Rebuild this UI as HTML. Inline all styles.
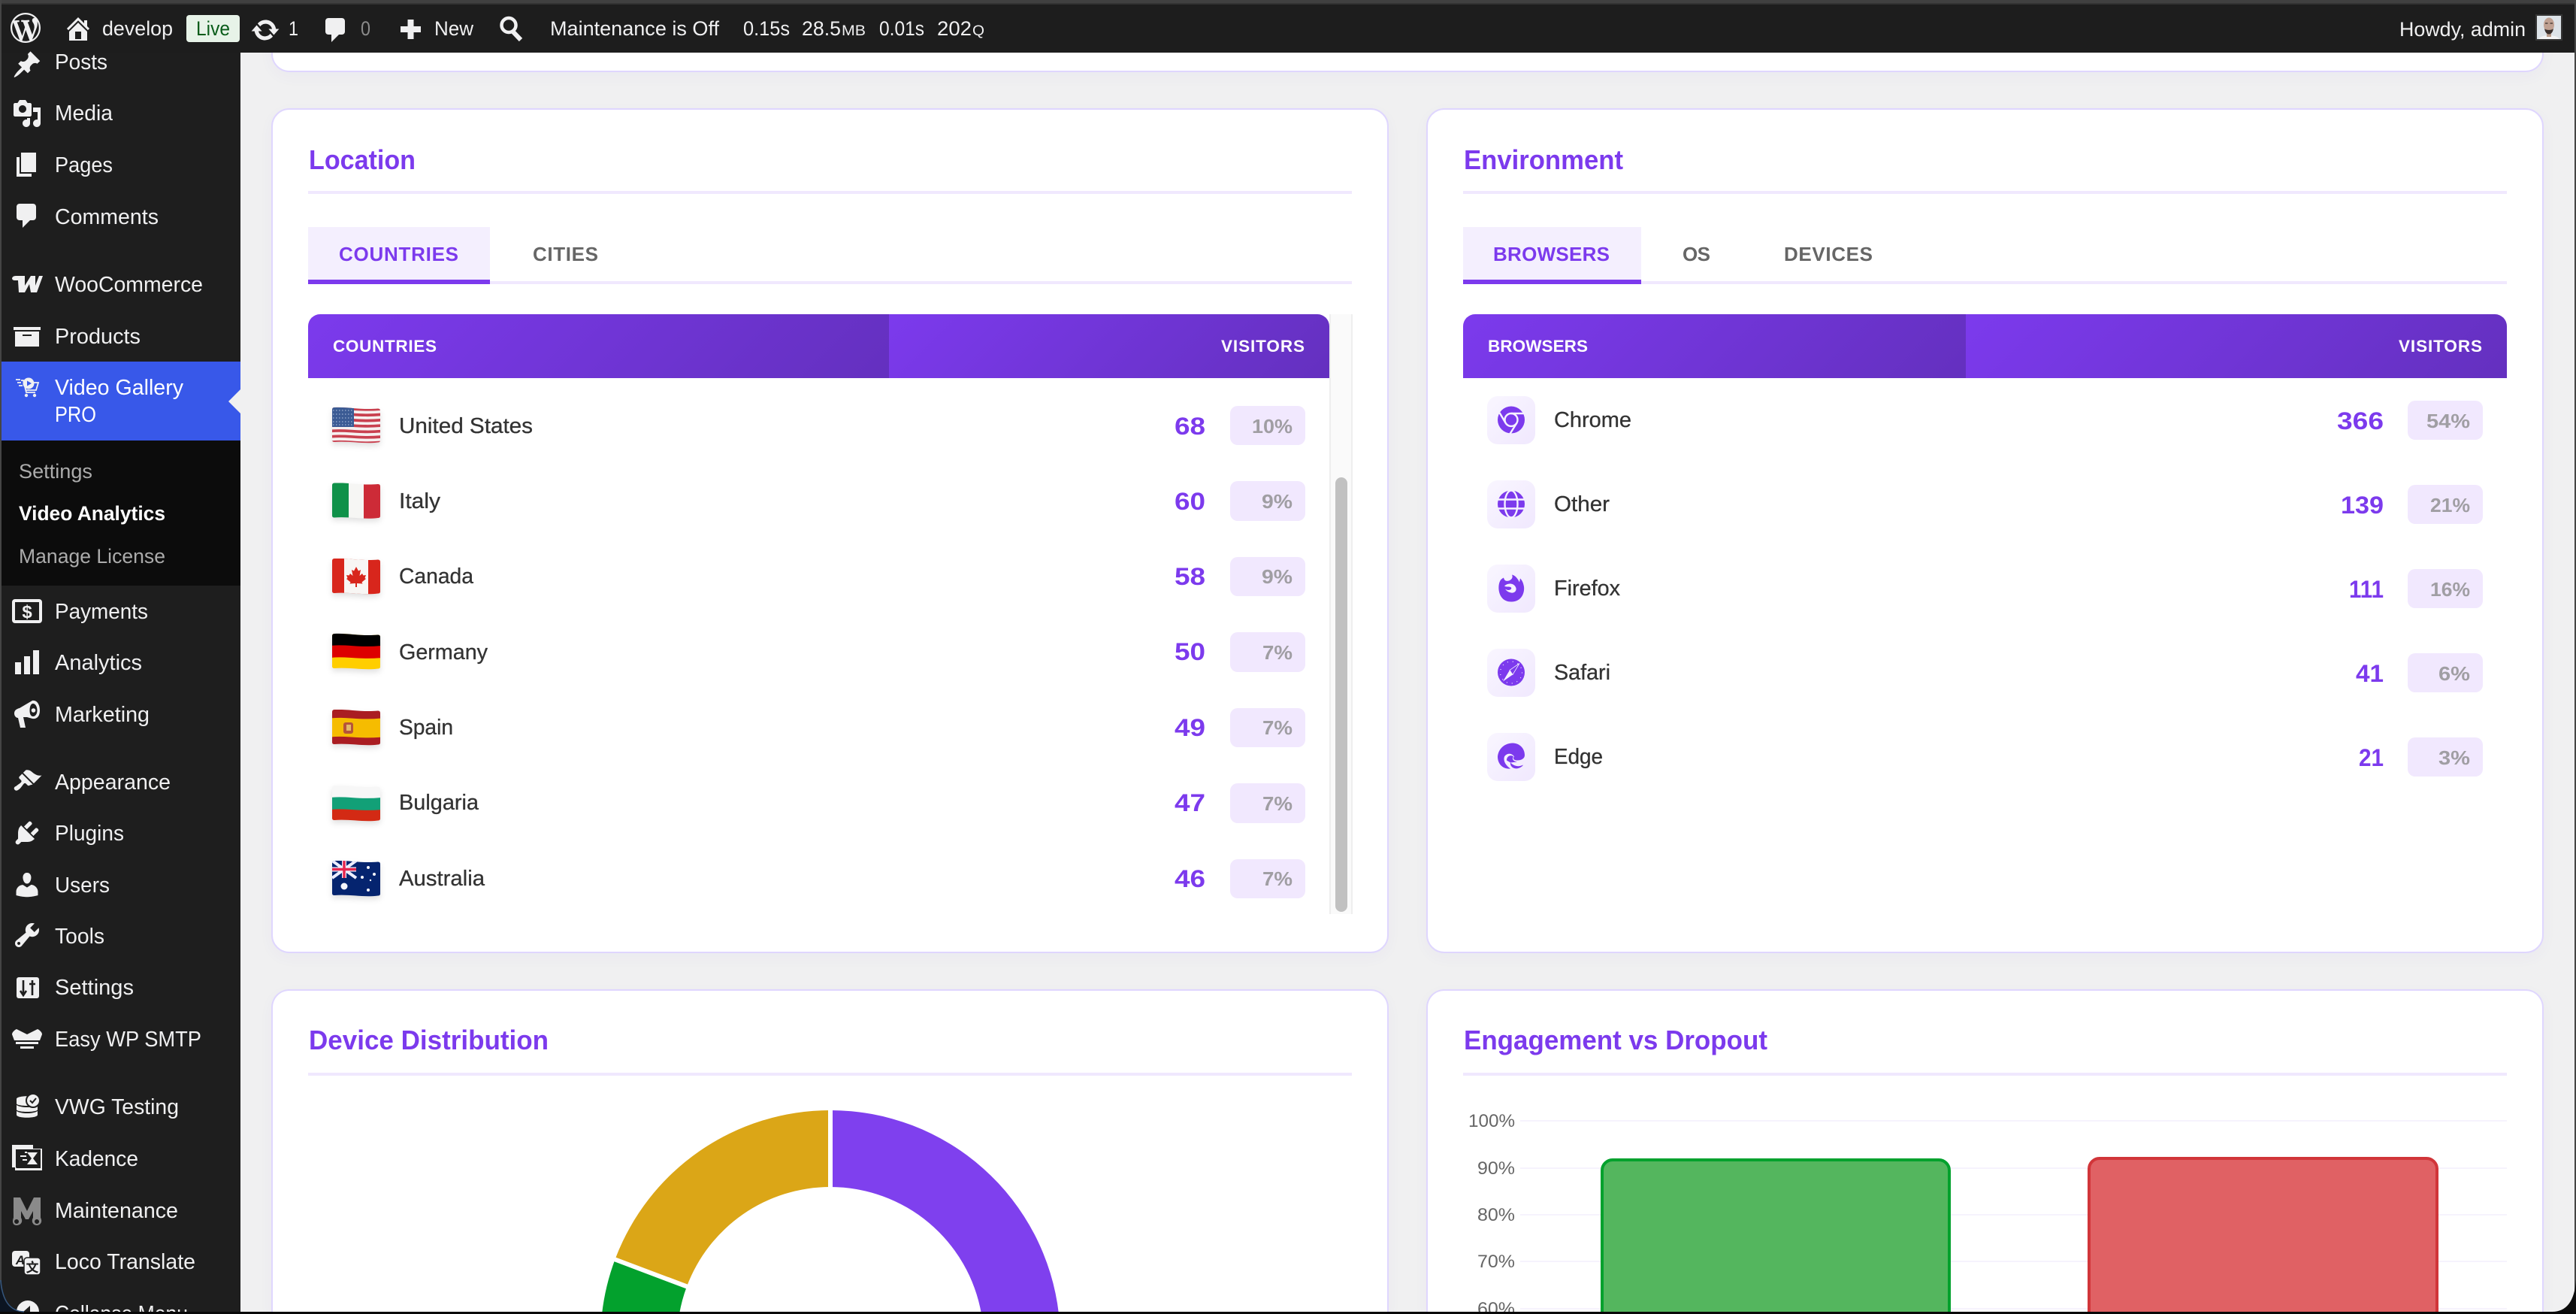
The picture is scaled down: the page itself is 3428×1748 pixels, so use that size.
<!DOCTYPE html>
<html><head><meta charset="utf-8"><title>Video Analytics</title>
<style>
html,body{margin:0;padding:0;background:#f0f0f1;width:3428px;height:1748px;overflow:hidden}
body{position:relative;font-family:"Liberation Sans","Noto Sans CJK SC",sans-serif}
div{position:absolute;box-sizing:border-box}
#root{left:0;top:0;width:3428px;height:1748px;overflow:hidden;background:#f0f0f1}
.card{background:#fff;border:2px solid #dfd6fe;border-radius:24px;box-shadow:0 6px 20px rgba(90,60,200,.035)}
.th{top:418px;height:85px;background:linear-gradient(135deg,#7c3aed,#6430bf)}
svg{position:absolute;left:0;top:0}
text{font-family:"Liberation Sans","Noto Sans CJK SC",sans-serif}
.s{font-size:28.5px;fill:#f0f0f1}
.a{font-size:26.5px;fill:#f0f0f1}
.sub{font-size:26.5px;fill:#ababab}
.t{font-size:36px;font-weight:700;fill:#7c3aed}
.tab{font-size:26px;font-weight:700;fill:#666}
.h{font-size:22.5px;font-weight:700;fill:#fff}
.n{font-size:28.5px;fill:#333;stroke:#333;stroke-width:.3px}
.v{font-size:32px;font-weight:700;fill:#7c3aed}
.p{font-size:26px;font-weight:700;fill:#a09ea3}
.l{font-size:24px;fill:#666}
</style></head><body>
<div id="root">
<div class="card" style="left:361px;top:0;width:3024px;height:96px;border-top:0;border-top-left-radius:0;border-top-right-radius:0"></div>
<div class="card" style="left:361px;top:144px;width:1487px;height:1124px"></div>
<div class="card" style="left:1898px;top:144px;width:1487px;height:1124px"></div>
<div class="card" style="left:361px;top:1316px;width:1487px;height:432px;border-bottom-left-radius:0;border-bottom-right-radius:0;border-bottom:0"></div>
<div class="card" style="left:1898px;top:1316px;width:1487px;height:432px;border-bottom-left-radius:0;border-bottom-right-radius:0;border-bottom:0"></div>
<div class="th" style="left:410px;width:773px;border-top-left-radius:16px"></div>
<div class="th" style="left:1183px;width:586px;border-top-right-radius:16px"></div>
<div class="th" style="left:1947px;width:669px;border-top-left-radius:16px"></div>
<div class="th" style="left:2616px;width:720px;border-top-right-radius:16px"></div>
<div style="left:0;top:70px;width:320px;height:1678px;background:#1e1e1e"></div>
<div style="left:2px;top:481px;width:318px;height:105px;background:#3858e9"></div>
<div style="left:2px;top:586px;width:318px;height:193px;background:#0c0c0c"></div>
<div style="left:0;top:6px;width:3428px;height:64px;background:#1d1d1d"></div>
<div style="left:0;top:0;width:3428px;height:4px;background:#404040"></div>
<div style="left:0;top:4px;width:3428px;height:2px;background:#333"></div>
<div style="left:0;top:0;width:2px;height:1748px;background:#454545"></div>
<div style="left:3426px;top:0;width:2px;height:1748px;background:#454545"></div>
<svg width="3428" height="1748" viewBox="0 0 3428 1748" xmlns="http://www.w3.org/2000/svg">
<defs>
<linearGradient id="tg" x1="0" y1="0" x2="1" y2="1"><stop offset="0" stop-color="#f9f6ff"/><stop offset="1" stop-color="#f0e8fe"/></linearGradient>
<path id="w" d="M-2 0C18 -2.5 36 3 66 0" fill="none"/>
<clipPath id="fc"><path d="M3 0C20 -1 38 3.500 61 1.500Q64 1.500 64 4.500V44Q64 46.500 61 46.500C42 49 24 44.500 3 46Q0 46 0 43.500V3Q0 .3 3 0Z"/></clipPath>
<clipPath id="av"><rect x="3376" y="21" width="32" height="31"/></clipPath>
</defs>

<!-- admin bar icons -->
<g fill="#f0f0f1">
<path transform="translate(14,17) scale(2)" fill-rule="evenodd" d="M20 10c0-5.510-4.490-10-10-10C4.480 0 0 4.490 0 10c0 5.520 4.480 10 10 10 5.510 0 10-4.480 10-10zM7.780 15.370L4.370 6.220c.55-.02 1.170-.08 1.170-.08.5-.06.44-1.130-.06-1.110 0 0-1.450.11-2.370.11-.18 0-.37 0-.58-.01C4.120 2.690 6.870 1.110 10 1.110c2.330 0 4.450.87 6.050 2.340-.68-.11-1.650.39-1.650 1.580 0 .74.45 1.360.9 2.100.35.61.55 1.360.55 2.460 0 1.490-1.400 5-1.400 5l-3.030-8.370c.54-.02.82-.17.82-.17.5-.05.44-1.250-.06-1.220 0 0-1.440.12-2.380.12-.87 0-2.330-.12-2.330-.12-.5-.03-.56 1.200-.06 1.220l.92.08 1.260 3.410zM17.410 10c.24-.64.74-1.870.43-4.250.7 1.290 1.050 2.710 1.050 4.250 0 3.290-1.730 6.240-4.400 7.780.97-2.590 1.940-5.200 2.920-7.780zM6.100 18.090C3.120 16.650 1.110 13.530 1.110 10c0-1.300.23-2.480.72-3.590C3.250 10.300 4.670 14.200 6.100 18.090zm4.030-6.630l2.580 6.980c-.86.29-1.760.45-2.710.45-.79 0-1.570-.11-2.290-.33.81-2.380 1.620-4.740 2.420-7.100z"/>
<path transform="translate(84,18) scale(2)" fill-rule="evenodd" d="M16 8.500l1.530 1.530-1.060 1.060L10 4.620l-6.470 6.470-1.060-1.060L10 2.500l4 4v-2h2v4zm-6-2.460l6 5.990V18H4v-5.970zM12 17v-5H8v5h4z"/>
<path transform="translate(333,20) scale(2)" d="M10.200 3.280c3.530 0 6.430 2.610 6.920 6h2.080l-3.500 4-3.500-4h2.320c-.45-1.970-2.210-3.450-4.320-3.450-1.450 0-2.730.71-3.540 1.780L4.950 5.660C6.230 4.200 8.110 3.280 10.200 3.280zm-.4 13.440c-3.520 0-6.430-2.610-6.920-6H.8l3.500-4c1.170 1.330 2.330 2.670 3.500 4H5.480c.45 1.970 2.210 3.450 4.320 3.450 1.450 0 2.730-.71 3.540-1.780l1.710 1.950c-1.280 1.460-3.150 2.380-5.250 2.380z"/>
<path transform="translate(427,20) scale(2)" d="M5 2h9c1.100 0 2 .9 2 2v7c0 1.100-.9 2-2 2h-2l-5 5v-5H5c-1.100 0-2-.9-2-2V4c0-1.100.9-2 2-2z"/>
<rect x="533" y="35" width="27" height="8"/><rect x="542.500" y="26" width="8" height="26"/>
</g>
<circle cx="677" cy="33.500" r="9.500" fill="none" stroke="#f0f0f1" stroke-width="4.500"/>
<path d="M682.500 42L693 53" stroke="#f0f0f1" stroke-width="6" fill="none"/>
<rect x="248" y="20" width="71" height="36" rx="4" fill="#e7f3e8"/>

<!-- admin bar text -->
<text class="a" x="136" y="47" textLength="94" lengthAdjust="spacingAndGlyphs">develop</text>
<text class="a" style="fill:#0a5c1a" x="261" y="47" textLength="45" lengthAdjust="spacingAndGlyphs">Live</text>
<text class="a" x="384" y="47" textLength="13" lengthAdjust="spacingAndGlyphs">1</text>
<text class="a" style="fill:#8a8a8a" x="480" y="47" textLength="13" lengthAdjust="spacingAndGlyphs">0</text>
<text class="a" x="578" y="47" textLength="52" lengthAdjust="spacingAndGlyphs">New</text>
<text class="a" x="732" y="47" textLength="225" lengthAdjust="spacingAndGlyphs">Maintenance is Off</text>
<text class="a" x="989" y="47" textLength="62" lengthAdjust="spacingAndGlyphs">0.15s</text>
<text class="a" x="1067" y="47" textLength="52" lengthAdjust="spacingAndGlyphs">28.5</text>
<text class="a" style="font-size:19px" x="1120" y="47" textLength="32" lengthAdjust="spacingAndGlyphs">MB</text>
<text class="a" x="1170" y="47" textLength="60" lengthAdjust="spacingAndGlyphs">0.01s</text>
<text class="a" x="1247" y="47" textLength="46" lengthAdjust="spacingAndGlyphs">202</text>
<text class="a" style="font-size:19px" x="1294" y="47" textLength="16" lengthAdjust="spacingAndGlyphs">Q</text>
<text class="a" x="3193" y="48" textLength="168" lengthAdjust="spacingAndGlyphs">Howdy, admin</text>

<!-- avatar -->
<rect x="3374" y="19" width="36" height="35" fill="#353535"/>
<g clip-path="url(#av)">
<rect x="3376" y="21" width="32" height="31" fill="#dde3e8"/>
<ellipse cx="3392" cy="53" rx="14" ry="6" fill="#f4f4f4"/>
<rect x="3389" y="42" width="6" height="7" fill="#b89c8c"/>
<ellipse cx="3392" cy="33" rx="7" ry="9.500" fill="#c0a192"/>
<path d="M3386 38C3387 44 3390 45.500 3392 45.500C3394 45.500 3397 44 3398 38C3396 40.500 3388 40.500 3386 38Z" fill="#3a302c"/>
<path d="M3387 31H3390.500M3393.500 31H3397" stroke="#3a302c" stroke-width="1.200" fill="none"/>
</g>

<!-- sidebar icons -->
<g fill="#f0f0f1">
<path transform="translate(16,70) scale(2)" d="M10.440 1.200l0 0h6.900l1.280 6.350-1.830 1.820c-1.050-.68-2.480-.57-3.410.36l-.75.75c-.92.93-1.040 2.350-.35 3.410l-1.830 1.820-2.410-2.410-2.800 2.790c-.42.42-3.380 2.710-3.800 2.290s1.860-3.390 2.280-3.810l2.790-2.790L4.100 7.560l1.830-1.820c1.050.69 2.480.57 3.400-.36l.75-.75c.4-.4.7-.9.8-1.430z" style="display:none"/>
<path transform="translate(16,66) scale(2)" d="M10.440 3.020l1.820-1.820 6.360 6.350-1.830 1.820c-1.050-.68-2.480-.57-3.410.36l-.75.75c-.92.93-1.040 2.350-.35 3.410l-1.830 1.820-2.410-2.410-2.800 2.790c-.42.42-3.380 2.710-3.800 2.290s1.860-3.390 2.280-3.810l2.790-2.790L4.100 9.360l1.830-1.820c1.050.69 2.480.57 3.400-.36l.75-.75c.93-.92 1.050-2.350.36-3.410z"/>
<path transform="translate(16,131) scale(2)" fill-rule="evenodd" d="M13 11V4c0-.55-.45-1-1-1h-1.670L9 1H5L3.670 3H2c-.55 0-1 .45-1 1v7c0 .55.45 1 1 1h10c.55 0 1-.45 1-1zM7 4.500c1.380 0 2.500 1.120 2.500 2.500S8.380 9.500 7 9.500 4.500 8.380 4.500 7 5.620 4.500 7 4.500zM14 6h5v10.500c0 1.380-1.120 2.500-2.500 2.500S14 17.880 14 16.500s1.120-2.500 2.500-2.500c.17 0 .34.02.5.05V9h-3V6zm-4 8.050V13h2v3.500c0 1.380-1.120 2.500-2.500 2.500S7 17.880 7 16.500 8.120 14 9.500 14c.17 0 .34.02.5.05z"/>
<path transform="translate(16,199) scale(2)" d="M6 15V2h10v13H6zm-1 1h8v2H3V5h2v11z"/>
<path transform="translate(16,267) scale(2)" d="M5 2h9c1.100 0 2 .9 2 2v7c0 1.100-.9 2-2 2h-2l-5 5v-5H5c-1.100 0-2-.9-2-2V4c0-1.100.9-2 2-2z"/>
<path d="M16 370Q17 367 21 367L33 367L33 380L41 367L47 367L47 380L52 367L57 367L49 389L41 389L39 378L33 389L25 389L24 373L20 373Q16 373 16 370Z"/>
<path transform="translate(16,427) scale(2)" fill-rule="evenodd" d="M19 4v2H1V4h18zM2 7h16v10H2V7zm11 3V9H7v1h6z"/>
<!-- video gallery cart -->
<g fill="none" stroke="#f0f0f1" stroke-width="1.800"><path d="M28 506H31L35 522H47"/><path d="M31 509H51L48 519H34"/><path d="M21 505H27M23 509H28M25 513H30"/></g>
<circle cx="38" cy="510" r="7.500"/><path d="M36 506.500L42 510L36 513.500Z" fill="#3858e9"/>
<circle cx="35" cy="526" r="2.200"/><circle cx="46" cy="526" r="2.200"/>
<!-- payments -->
<rect x="18" y="799" width="36" height="28" rx="2" fill="none" stroke="#f0f0f1" stroke-width="4"/>
<text x="36" y="822" text-anchor="middle" font-size="24" font-weight="700" style="fill:#f0f0f1">$</text>
<!-- analytics -->
<rect x="20" y="881" width="8" height="16"/><rect x="32" y="873" width="8" height="24"/><rect x="44" y="865" width="8" height="32"/>
<!-- marketing -->
<path fill-rule="evenodd" d="M43 932C49 931 53 937 53 945C53 953 49 957 43 956L36 954L31 954L34 968L27 968L24 955C21 955 19 952 19 949C19 945 22 943 26 942ZM44 936C41 936 39.500 940 39.500 945C39.500 950 41 953 44 953C47 953 49.500 950 49.500 945C49.500 940 47 936 44 936Z"/>
<circle cx="44.500" cy="945" r="2.800"/>
<path transform="translate(16,1020) scale(2)" d="M14.480 11.060L7.410 3.990l1.500-1.500c.5-.56 2.300-.47 3.510.32 1.210.8 1.430 1.280 2.910 2.100 1.180.64 2.450 1.260 4.450.85zm-.71.71L6.700 4.700 4.930 6.470c-.39.39-.39 1.020 0 1.410l1.060 1.060c.39.39.39 1.030 0 1.420-.6.6-1.430 1.110-2.210 1.690-.35.26-.7.53-1.010.84C1.430 13.230.91 14.490 1.830 15.400c.92.92 2.190.38 3.520-.94.31-.31.58-.66.84-1.010.58-.78 1.090-1.610 1.690-2.210.39-.39 1.020-.39 1.410 0l1.060 1.060c.39.39 1.020.39 1.410 0z"/>
<path transform="translate(16,1088) scale(2)" d="M13.110 4.360L9.870 7.600 8 5.730l3.240-3.240c.35-.34 1.050-.2 1.560.32.52.51.66 1.210.31 1.550zm-8 1.770l.91-1.120 9.010 9.010-1.190.84c-.71.71-2.630 1.160-3.820 1.160H6.140L4.900 17.260c-.59.59-1.540.59-2.120 0-.59-.58-.59-1.530 0-2.120l1.240-1.240v-3.880c0-1.130.4-3.190 1.090-3.890zm7.260 3.970l3.240-3.240c.34-.35 1.040-.21 1.550.31.52.51.66 1.210.31 1.550l-3.240 3.250z"/>
<path transform="translate(16,1157) scale(2)" d="M10 9.250c-2.270 0-2.730-3.440-2.730-3.440C7 4.020 7.820 2 9.970 2c2.160 0 2.980 2.020 2.710 3.810 0 0-.41 3.440-2.680 3.440zm0 2.570L12.720 10c2.390 0 4.520 2.330 4.520 4.530v2.490s-3.650 1.130-7.240 1.130c-3.650 0-7.240-1.130-7.240-1.130v-2.490c0-2.250 1.940-4.480 4.470-4.480z"/>
<path transform="translate(16,1224) scale(2)" fill-rule="evenodd" d="M16.680 9.770c-1.340 1.340-3.300 1.670-4.950.99l-5.410 6.520c-.99.99-2.590.99-3.580 0s-.99-2.590 0-3.570l6.520-5.420c-.68-1.650-.35-3.610.99-4.950 1.280-1.280 3.120-1.620 4.720-1.060l-2.890 2.890 2.820 2.820 2.860-2.870c.53 1.580.18 3.390-1.080 4.650zM3.810 16.210c.4.39 1.040.39 1.430 0 .4-.4.4-1.040 0-1.430-.39-.4-1.030-.4-1.430 0-.39.39-.39 1.030 0 1.430z"/>
<!-- settings -->
<rect x="22" y="1300" width="30" height="28" rx="3"/>
<path d="M31 1304V1324M27 1318L31 1324L35 1318M43 1304V1324M39 1309H47" fill="none" stroke="#1e1e1e" stroke-width="2.600"/>
<!-- smtp -->
<path d="M22 1369L36 1376L50 1369C54 1371 56 1374 56 1376L53 1384H19L16 1376C16 1374 18 1371 22 1369Z"/>
<rect x="21" y="1386" width="30" height="3"/><rect x="27" y="1392" width="18" height="3"/>
<!-- vwg -->
<path d="M22 1462C22 1457 50 1457 50 1462V1468C50 1472 22 1472 22 1468ZM22 1470C28 1474 44 1474 50 1470V1476C50 1480 22 1480 22 1476ZM22 1478C28 1482 44 1482 50 1478V1483C50 1488 22 1488 22 1483Z"/>
<circle cx="44" cy="1464" r="9" stroke="#1e1e1e" stroke-width="2"/>
<path d="M40 1464L43 1467L48 1461" fill="none" stroke="#1e1e1e" stroke-width="2"/>
<!-- kadence -->
<path fill-rule="evenodd" d="M16 1523H44V1528H56V1557H20V1553H16ZM21 1528V1553H21.500V1554H54V1529H21Z"/>
<path d="M50 1533H36L42 1541L36 1549H50L44 1541Z"/><path d="M27 1538H35M30 1543H36M33 1533H36" stroke="#f0f0f1" stroke-width="2"/>
<!-- maintenance -->
<path fill="#8a8a8a" fill-rule="evenodd" d="M18 1593H27L36 1611L45 1593H54V1620C57 1625 54 1630 49 1630C44 1630 41 1625 44 1620V1611L38 1622H34L28 1611V1620C31 1625 28 1630 22 1630C17 1630 16 1625 18 1620ZM22 1622A3 3 0 1 0 22.100 1628A3 3 0 1 0 22 1622ZM49 1622A3 3 0 1 0 49.100 1628A3 3 0 1 0 49 1622Z"/>
<!-- loco -->
<rect x="16" y="1664" width="23" height="21" rx="4"/>
<rect x="32" y="1673" width="22" height="23" rx="4" stroke="#1e1e1e" stroke-width="1.500"/>
<!-- collapse -->
<path d="M22.300 1748A15 15 0 1 1 51.700 1748Z"/>
</g>
<text x="27" y="1682" text-anchor="middle" font-size="17" font-weight="700" style="fill:#1e1e1e;font-style:italic">A</text>
<text x="43" y="1692" text-anchor="middle" font-size="17" font-weight="700" style="fill:#1e1e1e">文</text>
<path d="M40 1737L31 1745L34.500 1748H40Z" fill="#1e1e1e"/>
<path d="M304 534L320 518V550Z" fill="#f0f0f1"/>

<!-- sidebar text -->
<text class="s" x="73" y="92" textLength="70" lengthAdjust="spacingAndGlyphs">Posts</text>
<text class="s" x="73" y="160" textLength="77" lengthAdjust="spacingAndGlyphs">Media</text>
<text class="s" x="73" y="229" textLength="77" lengthAdjust="spacingAndGlyphs">Pages</text>
<text class="s" x="73" y="298" textLength="138" lengthAdjust="spacingAndGlyphs">Comments</text>
<text class="s" x="73" y="388" textLength="197" lengthAdjust="spacingAndGlyphs">WooCommerce</text>
<text class="s" x="73" y="457" textLength="114" lengthAdjust="spacingAndGlyphs">Products</text>
<text class="s" style="fill:#fff" x="73" y="525" textLength="171" lengthAdjust="spacingAndGlyphs">Video Gallery</text>
<text class="s" style="fill:#fff" x="73" y="561" textLength="55" lengthAdjust="spacingAndGlyphs">PRO</text>
<text class="sub" x="25" y="636" textLength="98" lengthAdjust="spacingAndGlyphs">Settings</text>
<text class="sub" style="fill:#fff;font-weight:700" x="25" y="692" textLength="195" lengthAdjust="spacingAndGlyphs">Video Analytics</text>
<text class="sub" x="25" y="749" textLength="195" lengthAdjust="spacingAndGlyphs">Manage License</text>
<text class="s" x="73" y="823" textLength="124" lengthAdjust="spacingAndGlyphs">Payments</text>
<text class="s" x="73" y="891" textLength="116" lengthAdjust="spacingAndGlyphs">Analytics</text>
<text class="s" x="73" y="960" textLength="126" lengthAdjust="spacingAndGlyphs">Marketing</text>
<text class="s" x="73" y="1050" textLength="154" lengthAdjust="spacingAndGlyphs">Appearance</text>
<text class="s" x="73" y="1118" textLength="92" lengthAdjust="spacingAndGlyphs">Plugins</text>
<text class="s" x="73" y="1187" textLength="73" lengthAdjust="spacingAndGlyphs">Users</text>
<text class="s" x="73" y="1255" textLength="66" lengthAdjust="spacingAndGlyphs">Tools</text>
<text class="s" x="73" y="1323" textLength="105" lengthAdjust="spacingAndGlyphs">Settings</text>
<text class="s" x="73" y="1392" textLength="195" lengthAdjust="spacingAndGlyphs">Easy WP SMTP</text>
<text class="s" x="73" y="1482" textLength="165" lengthAdjust="spacingAndGlyphs">VWG Testing</text>
<text class="s" x="73" y="1551" textLength="111" lengthAdjust="spacingAndGlyphs">Kadence</text>
<text class="s" x="73" y="1620" textLength="164" lengthAdjust="spacingAndGlyphs">Maintenance</text>
<text class="s" x="73" y="1688" textLength="187" lengthAdjust="spacingAndGlyphs">Loco Translate</text>
<text class="s" x="73" y="1757" textLength="177" lengthAdjust="spacingAndGlyphs">Collapse Menu</text>

<!-- card titles / dividers -->
<text class="t" x="411" y="225" textLength="142" lengthAdjust="spacingAndGlyphs">Location</text>
<text class="t" x="1948" y="225" textLength="212" lengthAdjust="spacingAndGlyphs">Environment</text>
<text class="t" x="411" y="1396" textLength="319" lengthAdjust="spacingAndGlyphs">Device Distribution</text>
<text class="t" x="1948" y="1396" textLength="404" lengthAdjust="spacingAndGlyphs">Engagement vs Dropout</text>
<g fill="#f0e8fe">
<rect x="410" y="254" width="1389" height="4"/><rect x="1947" y="254" width="1389" height="4"/>
<rect x="410" y="1427" width="1389" height="4"/><rect x="1947" y="1427" width="1389" height="4"/>
<rect x="410" y="374" width="1389" height="4"/><rect x="1947" y="374" width="1389" height="4"/>
</g>

<!-- tabs -->
<rect x="410" y="302" width="242" height="70" fill="#f4effe"/><rect x="410" y="372" width="242" height="6" fill="#7c3aed"/>
<rect x="1947" y="302" width="237" height="70" fill="#f4effe"/><rect x="1947" y="372" width="237" height="6" fill="#7c3aed"/>
<text class="tab" style="fill:#7c3aed" x="451" y="347" textLength="159" lengthAdjust="spacing">COUNTRIES</text>
<text class="tab" x="709" y="347" textLength="87" lengthAdjust="spacing">CITIES</text>
<text class="tab" style="fill:#7c3aed" x="1987" y="347" textLength="155" lengthAdjust="spacing">BROWSERS</text>
<text class="tab" x="2239" y="347" textLength="37" lengthAdjust="spacing">OS</text>
<text class="tab" x="2374" y="347" textLength="118" lengthAdjust="spacing">DEVICES</text>

<!-- table heads -->
<text class="h" x="443" y="468" textLength="138" lengthAdjust="spacing">COUNTRIES</text>
<text class="h" x="1625" y="468" textLength="111" lengthAdjust="spacing">VISITORS</text>
<text class="h" x="1980" y="468" textLength="133" lengthAdjust="spacing">BROWSERS</text>
<text class="h" x="3192" y="468" textLength="111" lengthAdjust="spacing">VISITORS</text>

<!-- scrollbar -->
<rect x="1770" y="418" width="29" height="798" fill="#fafafa"/>
<rect x="1769" y="418" width="2" height="798" fill="#eee"/><rect x="1798" y="418" width="2" height="798" fill="#eee"/>
<rect x="1777" y="635" width="16" height="578" rx="8" fill="#c1c1c1"/>

<!-- flags -->
<g transform="translate(442,542)" style="filter:drop-shadow(0 4px 4px rgba(0,0,0,.12))"><g clip-path="url(#fc)">
<rect width="64" height="48" fill="#f6f0f0"/>
<g stroke="#c9404f" stroke-width="3.700"><use href="#w" y="1.900"/><use href="#w" y="9.300"/><use href="#w" y="16.700"/><use href="#w" y="24"/><use href="#w" y="31.500"/><use href="#w" y="38.900"/><use href="#w" y="46.300"/></g>
<rect width="29" height="26" fill="#3b5b94"/>
<g stroke="#8ea3c8" stroke-width="1.500" stroke-dasharray="1.500 2.500"><path d="M1 4H29M1 9H29M1 14H29M1 19H29M1 23H29"/></g>
</g></g>
<g transform="translate(442,642.500)" style="filter:drop-shadow(0 4px 4px rgba(0,0,0,.12))"><g clip-path="url(#fc)">
<rect width="22" height="48" fill="#0f9149"/><rect x="22" width="20" height="48" fill="#f6f6f4"/><rect x="42" width="22" height="48" fill="#cd2b37"/>
</g></g>
<g transform="translate(442,743)" style="filter:drop-shadow(0 4px 4px rgba(0,0,0,.12))"><g clip-path="url(#fc)">
<rect width="64" height="48" fill="#d8261c"/><rect x="16" width="32" height="48" fill="#f8f6f4"/>
<path d="M32 11L35 16.500L38 15L36.500 23L40 20L41.500 22.500L45 22L43.500 26L45 27L39.500 31.500L40.500 33.500L33 33V38H31V33L23.500 33.500L24.500 31.500L19 27L20.500 26L19 22L22.500 22.500L24 20L27.500 23L26 15L29 16.500Z" fill="#d8261c"/>
</g></g>
<g transform="translate(442,843)" style="filter:drop-shadow(0 4px 4px rgba(0,0,0,.12))"><g clip-path="url(#fc)">
<rect width="64" height="48" fill="#ffce00"/>
<use href="#w" y="8" stroke="#000" stroke-width="17"/><use href="#w" y="24" stroke="#dd0000" stroke-width="16"/>
</g></g>
<g transform="translate(442,944)" style="filter:drop-shadow(0 4px 4px rgba(0,0,0,.12))"><g clip-path="url(#fc)">
<rect width="64" height="48" fill="#aa1d22"/>
<use href="#w" y="24" stroke="#f6bc00" stroke-width="25"/>
<rect x="15" y="17" width="13" height="15" rx="3" fill="#b5543a"/><rect x="19" y="20" width="6" height="8" fill="#e2b96b"/>
</g></g>
<g transform="translate(442,1045)" style="filter:drop-shadow(0 4px 4px rgba(0,0,0,.12))"><g clip-path="url(#fc)">
<rect width="64" height="48" fill="#f7f7f7"/>
<use href="#w" y="40" stroke="#d32a14" stroke-width="17"/><use href="#w" y="24" stroke="#12a077" stroke-width="16"/>
</g></g>
<g transform="translate(442,1145)" style="filter:drop-shadow(0 4px 4px rgba(0,0,0,.12))"><g clip-path="url(#fc)">
<rect width="64" height="48" fill="#05246f"/>
<path d="M0 0L32 23M32 0L0 23" stroke="#eef" stroke-width="4"/>
<path d="M16 0V23M0 11.500H32" stroke="#eef" stroke-width="6"/>
<path d="M16 0V23M0 11.500H32" stroke="#e6264e" stroke-width="3.500"/>
<g fill="#f5f6fb"><circle cx="16" cy="34" r="4.500"/><circle cx="48" cy="9" r="2"/><circle cx="40" cy="22" r="2"/><circle cx="56" cy="18" r="2"/><circle cx="48" cy="39" r="2"/><circle cx="51" cy="26" r="1.200"/></g>
</g></g>

<!-- country rows -->
<text class="n" x="531" y="576" textLength="178" lengthAdjust="spacingAndGlyphs">United States</text>
<text class="n" x="531" y="676" textLength="55" lengthAdjust="spacingAndGlyphs">Italy</text>
<text class="n" x="531" y="776" textLength="99" lengthAdjust="spacingAndGlyphs">Canada</text>
<text class="n" x="531" y="877" textLength="118" lengthAdjust="spacingAndGlyphs">Germany</text>
<text class="n" x="531" y="977" textLength="72" lengthAdjust="spacingAndGlyphs">Spain</text>
<text class="n" x="531" y="1077" textLength="106" lengthAdjust="spacingAndGlyphs">Bulgaria</text>
<text class="n" x="531" y="1178" textLength="114" lengthAdjust="spacingAndGlyphs">Australia</text>
<g fill="#f1e8fe">
<rect x="1637" y="540" width="100" height="52" rx="10"/><rect x="1637" y="640" width="100" height="53" rx="10"/><rect x="1637" y="741" width="100" height="52" rx="10"/><rect x="1637" y="841" width="100" height="53" rx="10"/><rect x="1637" y="942" width="100" height="52" rx="10"/><rect x="1637" y="1042" width="100" height="53" rx="10"/><rect x="1637" y="1143" width="100" height="52" rx="10"/>
</g>
<text class="v" x="1563" y="578" textLength="41" lengthAdjust="spacingAndGlyphs">68</text>
<text class="v" x="1563" y="678" textLength="41" lengthAdjust="spacingAndGlyphs">60</text>
<text class="v" x="1563" y="778" textLength="41" lengthAdjust="spacingAndGlyphs">58</text>
<text class="v" x="1563" y="878" textLength="41" lengthAdjust="spacingAndGlyphs">50</text>
<text class="v" x="1563" y="979" textLength="41" lengthAdjust="spacingAndGlyphs">49</text>
<text class="v" x="1563" y="1079" textLength="41" lengthAdjust="spacingAndGlyphs">47</text>
<text class="v" x="1563" y="1180" textLength="41" lengthAdjust="spacingAndGlyphs">46</text>
<text class="p" x="1666" y="576" textLength="54" lengthAdjust="spacingAndGlyphs">10%</text>
<text class="p" x="1679" y="676" textLength="41" lengthAdjust="spacingAndGlyphs">9%</text>
<text class="p" x="1679" y="776" textLength="41" lengthAdjust="spacingAndGlyphs">9%</text>
<text class="p" x="1680" y="877" textLength="40" lengthAdjust="spacingAndGlyphs">7%</text>
<text class="p" x="1680" y="977" textLength="40" lengthAdjust="spacingAndGlyphs">7%</text>
<text class="p" x="1680" y="1078" textLength="40" lengthAdjust="spacingAndGlyphs">7%</text>
<text class="p" x="1680" y="1178" textLength="40" lengthAdjust="spacingAndGlyphs">7%</text>

<!-- browser rows -->
<g fill="url(#tg)">
<rect x="1979" y="527" width="64" height="64" rx="14"/><rect x="1979" y="639" width="64" height="64" rx="14"/><rect x="1979" y="751" width="64" height="64" rx="14"/><rect x="1979" y="863" width="64" height="64" rx="14"/><rect x="1979" y="975" width="64" height="64" rx="14"/>
</g>
<g transform="translate(2011,558.500)"><circle r="18" fill="#7c3aed"/><g fill="none" stroke="#f6f1ff" stroke-width="2.400"><circle r="8.500"/><path d="M0 -8.500H17.500M7.400 4.250L-1.500 18.500M-7.400 4.250L-15.500 -9.500"/></g></g>
<g transform="translate(2011,670.500)"><circle r="18" fill="#7c3aed"/><g fill="none" stroke="#f6f1ff" stroke-width="2.400"><ellipse rx="8.500" ry="18"/><path d="M-18 -6H18M-18 6H18"/></g></g>
<g transform="translate(2011,782.500)"><path d="M-14 -11C-19 -4 -18 18 0 18C14 18 18 6 17 -2C16 -8 14 -11 12 -13L11 -8C8 -14 5 -17 1 -18C3 -14 0 -11 -3 -10C-7 -9 -9 -10 -10 -14C-12 -13 -13 -12 -14 -11Z" fill="#7c3aed"/><path d="M-9 -3C-5 -7 2 -7 5 -3C9 2 5 7 0 6C-3 5.500 -6 4 -8 1C-5 3 -2 3 0 1C1 -1 -1 -2 -4 -2C-6 -2 -8 -2 -9 -3Z" fill="#f6f1ff"/></g>
<g transform="translate(2011,894.500)"><circle r="18" fill="#7c3aed"/><circle r="14.500" fill="none" stroke="#f6f1ff" stroke-width="1.200" stroke-dasharray="1 6"/><path d="M11 -12L2 3L-11 12L-2 -3Z" fill="#f6f1ff"/><path d="M11 -12L-2 -3L2 3Z" fill="#7c3aed" stroke="#f6f1ff" stroke-width=".8"/></g>
<g transform="translate(2011,1006.500)"><path d="M-18 0C-17 -11 -8 -18 2 -18C11 -18 18 -11 18 -2C18 3 13 5 8 5C3 5 2 2 4 0C1 -5 -6 -5 -9 0C-11 6 -7 12 -1 16C-11 17 -18 10 -18 0Z" fill="#7c3aed"/><path d="M-1 8C-2 13 4 18 11 15C13 14 15 13 16 11C10 14 4 13 -1 8Z" fill="#7c3aed"/><path d="M-6 5C-6 -1 0 -3 3 0C1 3 2 6 8 7L-1 8Z" fill="#7c3aed"/></g>
<text class="n" x="2068" y="568" textLength="103" lengthAdjust="spacingAndGlyphs">Chrome</text>
<text class="n" x="2068" y="680" textLength="74" lengthAdjust="spacingAndGlyphs">Other</text>
<text class="n" x="2068" y="792" textLength="88" lengthAdjust="spacingAndGlyphs">Firefox</text>
<text class="n" x="2068" y="904" textLength="75" lengthAdjust="spacingAndGlyphs">Safari</text>
<text class="n" x="2068" y="1016" textLength="65" lengthAdjust="spacingAndGlyphs">Edge</text>
<g fill="#f1e8fe">
<rect x="3204" y="533" width="100" height="52" rx="10"/><rect x="3204" y="645" width="100" height="52" rx="10"/><rect x="3204" y="757" width="100" height="52" rx="10"/><rect x="3204" y="869" width="100" height="52" rx="10"/><rect x="3204" y="981" width="100" height="52" rx="10"/>
</g>
<text class="v" x="3110" y="571" textLength="62" lengthAdjust="spacingAndGlyphs">366</text>
<text class="v" x="3115" y="683" textLength="57" lengthAdjust="spacingAndGlyphs">139</text>
<text class="v" x="3126" y="795" textLength="46" lengthAdjust="spacingAndGlyphs">111</text>
<text class="v" x="3135" y="907" textLength="37" lengthAdjust="spacingAndGlyphs">41</text>
<text class="v" x="3139" y="1019" textLength="33" lengthAdjust="spacingAndGlyphs">21</text>
<text class="p" x="3229" y="569" textLength="58" lengthAdjust="spacingAndGlyphs">54%</text>
<text class="p" x="3234" y="681" textLength="53" lengthAdjust="spacingAndGlyphs">21%</text>
<text class="p" x="3234" y="793" textLength="53" lengthAdjust="spacingAndGlyphs">16%</text>
<text class="p" x="3245" y="905" textLength="42" lengthAdjust="spacingAndGlyphs">6%</text>
<text class="p" x="3245" y="1017" textLength="42" lengthAdjust="spacingAndGlyphs">3%</text>

<!-- donut -->
<path fill="#7f40ee" d="M1105 1477A306 306 0 0 1 1409 1748H1306A204 204 0 0 0 1105 1579Z"/>
<path fill="#dba617" d="M818.500 1675.300A306 306 0 0 1 1105 1477L1105 1579A204 204 0 0 0 914 1711.200Z"/>
<path fill="#03a12d" d="M801 1748A306 306 0 0 1 818.500 1675.300L914 1711.200A204 204 0 0 0 904 1748Z"/>
<path d="M1105 1472V1584M812 1673L920 1713.700" stroke="#fff" stroke-width="6" fill="none"/>

<!-- bar chart -->
<g fill="#f6f3fd">
<rect x="2023" y="1490" width="1313" height="2"/><rect x="2023" y="1553" width="1313" height="2"/><rect x="2023" y="1615" width="1313" height="2"/><rect x="2023" y="1677" width="1313" height="2"/><rect x="2023" y="1740" width="1313" height="2"/>
</g>
<text class="l" x="1954" y="1499" textLength="62" lengthAdjust="spacingAndGlyphs">100%</text>
<text class="l" x="1966" y="1562" textLength="50" lengthAdjust="spacingAndGlyphs">90%</text>
<text class="l" x="1966" y="1624" textLength="50" lengthAdjust="spacingAndGlyphs">80%</text>
<text class="l" x="1966" y="1686" textLength="50" lengthAdjust="spacingAndGlyphs">70%</text>
<text class="l" x="1966" y="1749" textLength="50" lengthAdjust="spacingAndGlyphs">60%</text>
<path d="M2132 1746V1557A14 14 0 0 1 2146 1543H2580A14 14 0 0 1 2594 1557V1746" fill="#54b65e" stroke="#03a12d" stroke-width="4"/>
<path d="M2780 1746V1555A14 14 0 0 1 2794 1541H3229A14 14 0 0 1 3243 1555V1746" fill="#e06164" stroke="#d13539" stroke-width="4"/>

<!-- window bottom -->
<rect x="0" y="1745" width="3428" height="3" fill="#080808"/>
<path d="M0 1703Q3 1745 32 1745H0Z" fill="#0c1522"/>
<path d="M1 1703Q4 1744 32 1745" fill="none" stroke="#33567f" stroke-width="1.500"/>
<path d="M3428 1703Q3425 1745 3396 1745H3428Z" fill="#0c0c0c"/>
</svg>
</div>
</body></html>
